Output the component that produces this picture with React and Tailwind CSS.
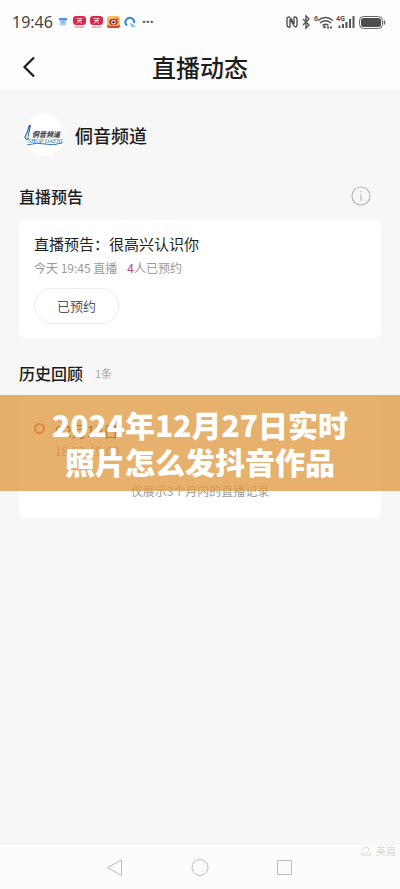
import React from 'react';

function AppIcons() {
  return (
    <div className="flex items-center gap-1" aria-hidden="true">
      <svg width="10" height="12" viewBox="0 0 10 12">
        <rect x="0" y="2" width="8" height="2.4" rx="0.5" fill="#4a8df0" />
        <rect x="1" y="4.4" width="6" height="5" rx="1" fill="#a9ccf6" />
        <path d="M2.5 6h3" stroke="#5f9cf0" />
      </svg>
      {[0, 1].map((i) => (
        <svg key={i} width="13" height="14" viewBox="0 0 13 14">
          <rect x="0" y="1" width="13" height="9" rx="3" fill="#d92850" />
          <path d="M3.5 3.5h6M4 5.5h5M8 3.5L4 8.5M5.5 5.5L9 8.5" stroke="#fbd5dc" strokeWidth="0.9" fill="none" />
          <path d="M2 12h9" stroke="#cf4a4a" strokeWidth="1.2" strokeDasharray="1.8 0.5" />
        </svg>
      ))}
      <svg width="13" height="14" viewBox="0 0 13 14">
        <rect x="0" y="1" width="13" height="12" rx="3" fill="#f9bd62" />
        <path d="M0 10q6 2 13 0v1a2 2 0 0 1-2 2H2a2 2 0 0 1-2-2z" fill="#d9482b" />
        <ellipse cx="6.5" cy="7" rx="4.3" ry="3.3" fill="#b8322a" />
        <circle cx="6.5" cy="7.2" r="2.2" fill="#fff" />
        <circle cx="6.5" cy="7.2" r="1.2" fill="#222" />
        <path d="M9 3q2 0 2 2" stroke="#c8452f" fill="none" />
      </svg>
      <svg width="12" height="14" viewBox="0 0 12 14">
        <path d="M3 10.500a4.300 4.300 0 1 1 7-2.500" fill="none" stroke="#2f86d6" strokeWidth="2" />
        <path d="M5.5 8q3 0 6 4H7.5z" fill="#7cc4ef" />
      </svg>
    </div>
  );
}

function StatusIcons() {
  return (
    <svg width="102" height="18" viewBox="0 0 102 18" role="img" aria-label="NFC, 蓝牙, Wi-Fi, 4G, 电池">
      <g fill="none" stroke="#555">
        <path d="M4 4H3a2 2 0 0 0-2 2v6a2 2 0 0 0 2 2h1V6.5M3.8 6l5 8M8 4h1a2 2 0 0 1 2 2v6a2 2 0 0 1-2 2M8 4v7L4.5 4.5" strokeWidth="1.4" />
        <path d="M17 6l6 6-3 3V3l3 3-6 6" strokeWidth="1.4" />
        <path d="M32 7.5q7.5-6 15 0M34 10q5.5-4.5 11 0M36.5 12.5q3-2.5 6 0" strokeWidth="1.6" />
        <path d="M41 14.5h5" strokeWidth="2" strokeDasharray="2 1" />
        <path d="M53.5 12.5V15M57 11v4M60.5 9v6M64 6v9M67.5 3v12" strokeWidth="2" />
      </g>
      <circle cx="38.5" cy="14" r="1.4" fill="#555" />
      <g fontSize="7" fontWeight="700" fill="#555" fontFamily="Noto Sans, sans-serif">
        <text x="28" y="8">6</text>
        <text x="50" y="8">4G</text>
      </g>
      <rect x="73.5" y="3.5" width="23" height="12" rx="4" fill="none" stroke="#666" />
      <rect x="75" y="5" width="20" height="9" rx="2.5" fill="#4d4d4d" />
      <path d="M98.5 7.5v4" stroke="#666" strokeWidth="1.5" />
    </svg>
  );
}

function ChannelLogo() {
  return (
    <svg className="rounded-full bg-white" width="42" height="42" viewBox="0 0 42 42" aria-hidden="true">
      <path d="M6.5 11q-2 7-4.500 12q1 4 4 1M7.5 11L5 23" stroke="#2e6ca8" strokeWidth="1.2" fill="none" />
      <text x="9" y="23" fontSize="7" fontWeight="700" fontStyle="italic" fill="#26303d">侗音频道</text>
      <text x="5" y="29" fontSize="6" fontStyle="italic" fontFamily="Liberation Serif, serif" fill="#2e6ca8">SHOP DAENL</text>
      <path d="M4 31q10-3 18-1t17-1" stroke="#2e78b8" strokeWidth="1" fill="none" />
    </svg>
  );
}

export default function App() {
  return (
    <div className="relative flex min-h-screen flex-col bg-[#f7f7f7] font-['Noto_Sans_CJK_SC',sans-serif] text-[#1c1c1c]">
      <header className="bg-[#fdfdfd]">
        <div className="flex h-11 items-center justify-between px-3">
          <div className="flex items-center gap-1.5">
            <span className="font-['Noto_Sans',sans-serif] text-base text-[#444]">19:46</span>
            <AppIcons />
            <span className="font-['Noto_Sans',sans-serif] text-sm font-bold text-[#555]">···</span>
          </div>
          <StatusIcons />
        </div>
        <div className="relative flex h-[46px] items-center justify-center">
          <button type="button" aria-label="返回" className="absolute left-5">
            <svg width="18" height="24" viewBox="0 0 18 24" fill="none" stroke="#1c1c1c" strokeWidth="2.2">
              <path d="M14 2.5L4.5 12l9.5 9.5" />
            </svg>
          </button>
          <h1 className="text-2xl font-medium">直播动态</h1>
        </div>
      </header>

      <main className="flex-1 px-[19px]">
        <div className="flex items-center gap-2.5 pt-6 pl-1">
          <ChannelLogo />
          <h2 className="text-lg font-medium">侗音频道</h2>
        </div>

        <section>
          <div className="mt-7 flex h-6 items-center justify-between pr-2.5">
            <h2 className="text-base font-medium">直播预告</h2>
            <button type="button" aria-label="说明">
              <svg width="20" height="20" viewBox="0 0 20 20" fill="none" stroke="#b5b5b5" strokeWidth="1.2">
                <circle cx="10" cy="10" r="9" />
                <path d="M10 8.5V15M10 5v1.5" />
              </svg>
            </button>
          </div>
          <div className="mt-3 rounded-md bg-white px-[15px] pt-3 pb-[15px]">
            <h3 className="text-[15px] leading-6">直播预告：很高兴认识你</h3>
            <p className="text-xs leading-6 text-[#999]">
              今天 19:45 直播<span className="ml-2.5 text-[#c4457c]">4</span>人已预约
            </p>
            <button type="button" className="mt-2 block h-9 rounded-full border border-[#ececec] px-[22px] text-[13px] text-[#555]">
              已预约
            </button>
          </div>
        </section>

        <section>
          <div className="mt-[22px] flex h-6 items-center gap-3">
            <h2 className="text-base font-medium">历史回顾</h2>
            <span className="text-[11px] text-[#aaa]">1条</span>
          </div>
          <div className="relative mt-3.5 rounded-md bg-white px-[15px] pt-5 pb-[19px]">
            <div className="flex gap-[10px]">
              <span className="mt-1 h-[11px] w-[11px] rounded-full border-2 border-[#e0203a]" />
              <div>
                <p className="text-[15px] leading-6 text-black">02月12日</p>
                <p className="text-xs leading-4 text-[#888]">18:52-19:00</p>
              </div>
            </div>
            <p className="mt-6 text-center text-xs leading-4 text-[#999]">仅展示3个月内的直播记录</p>
            <div className="absolute -inset-x-[19px] -top-1 flex h-24 items-center justify-center bg-[#e09c48]/80 text-center text-[30px] leading-[37px] font-black text-white">
              <p>2024年12月27日实时<br />照片怎么发抖音作品</p>
            </div>
          </div>
        </section>
      </main>

      <footer className="relative flex h-11 items-center justify-center bg-[#fcfcfc]">
        <nav className="flex gap-[67px]">
          <button type="button" aria-label="返回">
            <svg width="18" height="18" viewBox="0 0 18 18"><path d="M15.5 2v15.500L1.5 9.700z" fill="none" stroke="#bbb" /></svg>
          </button>
          <button type="button" aria-label="主页">
            <svg width="18" height="18" viewBox="0 0 18 18"><circle cx="9" cy="9.5" r="8" fill="none" stroke="#bbb" /></svg>
          </button>
          <button type="button" aria-label="最近任务">
            <svg width="18" height="18" viewBox="0 0 18 18"><path d="M1.5 2.5h14v14h-14z" fill="none" stroke="#bbb" /></svg>
          </button>
        </nav>
        <span className="absolute top-0 right-1 flex items-center gap-1 text-[10px] leading-3 text-[#d8d8d8]">
          <svg width="12" height="12" viewBox="0 0 12 12" fill="none" stroke="#d8d8d8">
            <path d="M3 5a3 2.5 0 1 1 5 1.5L3 10h7M2 7q-2 3 1 3M9 7q3 2 1 3" />
          </svg>
          美篇
        </span>
      </footer>
    </div>
  );
}
